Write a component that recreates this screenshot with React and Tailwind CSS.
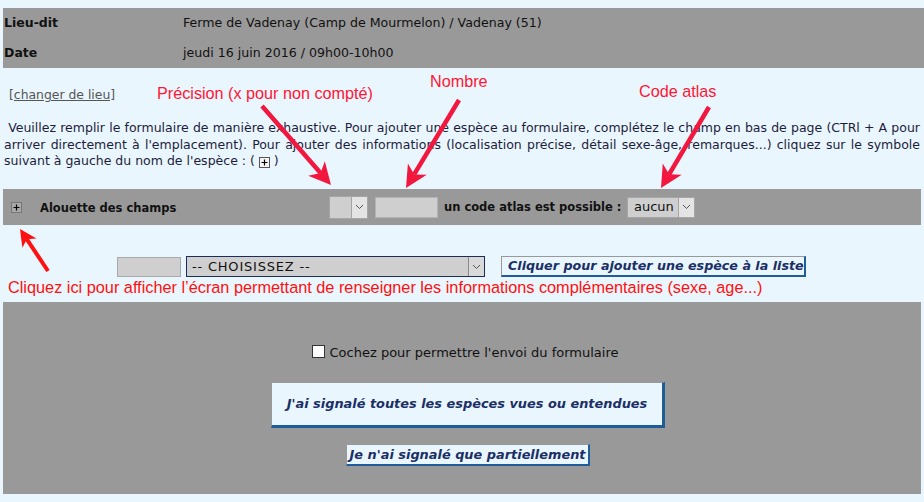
import React from 'react';

// ── Hulpjes ───────────────────────────────────────────────────────────────────

const VERDANA = "font-['Verdana','DejaVu_Sans',sans-serif]";
const ARIAL = "font-['Liberation_Sans','Arial',sans-serif]";

function Chevron() {
  return (
    <svg width="9" height="6" viewBox="0 0 9 6" className="block">
      <polyline points="1,1 4.5,4.5 8,1" fill="none" stroke="#555" strokeWidth="1" />
    </svg>
  );
}

function PlusBox({ light = false }) {
  return (
    <span className={`inline-flex items-center justify-center w-[11px] h-[11px] border ${light ? 'border-[#555] bg-[#f4f4f4]' : 'border-[#777] bg-[#a9a9a9]'} align-[-1px]`}>
      <svg width="7" height="7" viewBox="0 0 7 7" className="block">
        <path d="M3.5 0.5v6M0.5 3.5h6" stroke="#000" strokeWidth="1.2" />
      </svg>
    </span>
  );
}

function FakeSelect({ className = '', label = '', labelClass = '', border = 'border-[#a6a6a6]', chevronBox = 'bg-[#e4e4e4] border-l border-[#a6a6a6]' }) {
  return (
    <div className={`flex items-stretch bg-[#cfcfcf] border ${border} ${className}`}>
      <div className={`flex-1 flex items-center pl-[5px] text-[13px] text-[#111] whitespace-nowrap ${labelClass}`}>{label}</div>
      <div className={`w-[16px] flex items-center justify-center ${chevronBox}`}>
        <Chevron />
      </div>
    </div>
  );
}

function Arrow({ x1, y1, x2, y2, color, w = 4.5, head = 22 }) {
  const dx = x2 - x1, dy = y2 - y1;
  const L = Math.hypot(dx, dy);
  const ux = dx / L, uy = dy / L;
  const px = -uy, py = ux;
  const bx = x2 - ux * head, by = y2 - uy * head;
  const nx = x2 - ux * head * 0.72, ny = y2 - uy * head * 0.72;
  const hw = head * 0.5;
  const pts = [
    [x2, y2],
    [bx + px * hw, by + py * hw],
    [nx, ny],
    [bx - px * hw, by - py * hw],
  ].map((p) => p.join(',')).join(' ');
  return (
    <g>
      <line x1={x1} y1={y1} x2={nx} y2={ny} stroke={color} strokeWidth={w} strokeLinecap="butt" />
      <polygon points={pts} fill={color} />
    </g>
  );
}

// ── Pagina ────────────────────────────────────────────────────────────────────

export default function App() {
  return (
    <div className={`relative w-[924px] h-[502px] overflow-hidden bg-[#eaf6fd] pt-[8px] ${VERDANA}`}>
      {/* Kop-tabel */}
      <div className="ml-[3px] bg-[#999999] text-[12.6px] text-[#111]">
        <div className="flex items-center h-[30px]">
          <div className="w-[180px] pl-[1px] font-bold text-[12.5px]">Lieu-dit</div>
          <div>Ferme de Vadenay (Camp de Mourmelon) / Vadenay (51)</div>
        </div>
        <div className="flex items-center h-[30px]">
          <div className="w-[180px] pl-[1px] font-bold text-[12.5px]">Date</div>
          <div>jeudi 16 juin 2016 / 09h00-10h00</div>
        </div>
      </div>

      {/* Lieu wijzigen */}
      <div className="mt-[19px] pl-[9px] h-[16px] leading-[16px] text-[12.4px]">
        <span className="text-[#555] underline">[changer de lieu]</span>
      </div>

      {/* Uitleg */}
      <p className="mt-[17px] px-[4px] text-[12.5px] leading-[16.5px] text-[#1c1c3c] text-justify">
        &nbsp;Veuillez remplir le formulaire de manière exhaustive. Pour ajouter une espèce au formulaire, complétez le champ en bas de page (CTRl + A pour arriver directement à l'emplacement). Pour ajouter des informations (localisation précise, détail sexe-âge, remarques...) cliquez sur le symbole suivant à gauche du nom de l'espèce : ( <PlusBox light /> )
      </p>

      {/* Soortregel */}
      <div className="mt-[19.5px] mx-[3px] h-[36px] bg-[#999999] flex items-center text-[11.5px]">
        <div className="ml-[8px] flex items-center"><PlusBox /></div>
        <div className="ml-[18px] w-[289px] font-bold text-[#111] pt-[3px]">Alouette des champs</div>
        <div className="flex items-stretch w-[39px] h-[23px] border border-[#a6a6a6] bg-[#cfcfcf]">
          <div className="flex-1" />
          <div className="w-[16px] bg-[#e4e4e4] border-l border-[#a6a6a6] flex items-center justify-center"><Chevron /></div>
        </div>
        <div className="ml-[7px] w-[63px] h-[21px] bg-[#cfcfcf] border border-[#b3b3b3]" />
        <div className="ml-[6px] w-[177px] font-bold text-[#111] whitespace-nowrap pt-[1px]">un code atlas est possible :</div>
        <FakeSelect className="ml-[6px] w-[68px] h-[21px]" label="aucun" labelClass="pl-[6px]" />
      </div>

      {/* Soort toevoegen */}
      <div className="mt-[31px] h-[21px] flex items-center text-[13px]">
        <div className="ml-[117px] w-[64px] h-[20px] bg-[#cfcfcf] border border-[#a9a9a9]" />
        <FakeSelect
          className="ml-[5px] w-[299px] h-[21px]"
          label="-- CHOISISSEZ --"
          labelClass="tracking-[0.8px]"
          border="border-[#1c2d5c]"
          chevronBox="bg-[#d9d9d9] border-l border-[#8a8a8a]"
        />
        <div className="ml-[16px] w-[305px] h-[21px] flex items-center pl-[6px] bg-[#eaf6fd] border-t border-l border-[#999] border-r-2 border-b-2 border-r-[#1f5c99] border-b-[#1f5c99] font-bold italic text-[12.7px] text-[#1a2f66] whitespace-nowrap">
          Cliquer pour ajouter une espèce à la liste
        </div>
      </div>

      {/* Verzenden */}
      <div className="mt-[25px] mx-[3px] h-[192px] bg-[#999999] flex flex-col items-center pt-[43px]">
        <div className="flex items-center h-[16px] text-[13px] text-[#111] ml-[6px]">
          <span className="w-[13px] h-[13px] bg-white border border-[#333] mr-[5px] -mt-[3px]" />
          <span>Cochez pour permettre l'envoi du formulaire</span>
        </div>
        <div className="mt-[21px] ml-[12px] w-[394px] h-[46px] flex items-center justify-center bg-[#eaf6fd] border-t border-l border-[#999] border-r-[3px] border-b-[3px] border-r-[#1f5c99] border-b-[#1f5c99] font-bold italic text-[12.9px] text-[#1a2f66] whitespace-nowrap">
          J'ai signalé toutes les espèces vues ou entendues
        </div>
        <div className="mt-[16px] ml-[12px] w-[244px] h-[22px] flex items-center justify-center bg-[#eaf6fd] border-t border-l border-[#999] border-r-2 border-b-2 border-r-[#1f5c99] border-b-[#1f5c99] font-bold italic text-[12.9px] text-[#1a2f66] whitespace-nowrap">
          Je n'ai signalé que partiellement
        </div>
      </div>

      {/* Annotaties */}
      <div className={`absolute left-[157px] top-[83px] text-[16.2px] leading-[20px] text-[#ff1535] ${ARIAL}`}>Précision (x pour non compté)</div>
      <div className={`absolute left-[430px] top-[71px] text-[16.2px] leading-[20px] text-[#ff1535] ${ARIAL}`}>Nombre</div>
      <div className={`absolute left-[639px] top-[81px] text-[16.2px] leading-[20px] text-[#ff1535] ${ARIAL}`}>Code atlas</div>
      <div className={`absolute left-[8px] top-[277px] text-[16.3px] leading-[20px] text-[#ff1010] ${ARIAL}`}>Cliquez ici pour afficher l’écran permettant de renseigner les informations complémentaires (sexe, age...)</div>

      <svg className="absolute inset-0 pointer-events-none" width="924" height="502">
        <Arrow x1={262} y1={106} x2={331} y2={185} color="#f2173f" />
        <Arrow x1={459} y1={100} x2={406} y2={188} color="#f2173f" />
        <Arrow x1={709} y1={107} x2={661} y2={188} color="#f2173f" />
        <Arrow x1={48} y1={271} x2={20} y2={229} color="#ff1010" w={4} head={17} />
      </svg>
    </div>
  );
}
